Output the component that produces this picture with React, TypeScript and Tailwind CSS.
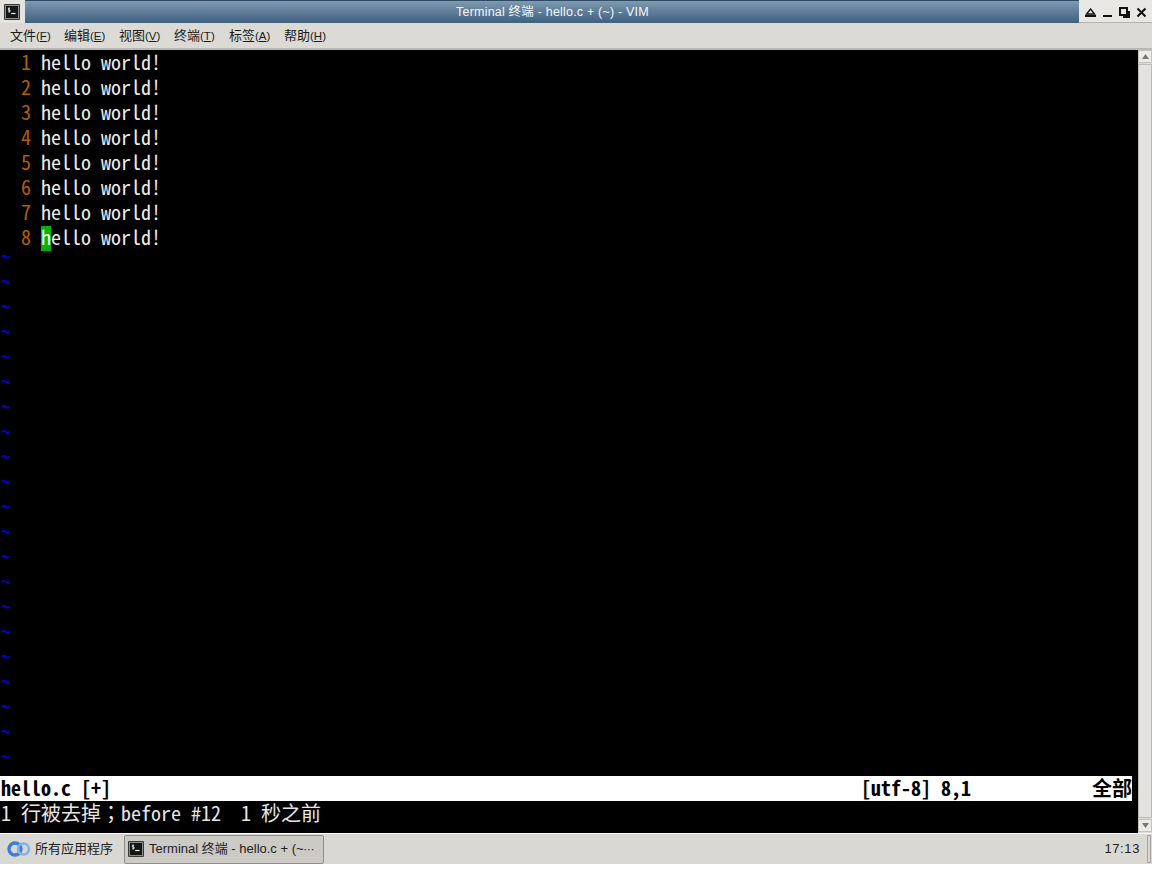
import React from "react";

const mono = "font-['Noto_Sans_Mono_CJK_SC','DejaVu_Sans_Mono',monospace]";
const sans = "font-['Liberation_Sans','Noto_Sans_CJK_SC',sans-serif]";

function TermIcon({ size }: { size: number }) {
  return (
    <svg width={size} height={size} viewBox="0 0 16 16" className="shrink-0">
      <rect x="0" y="0" width="16" height="16" rx="1" fill="#3a3c3c" />
      <rect x="1" y="1" width="14" height="14" fill="#8a8c8a" />
      <rect x="2" y="2" width="12" height="12" fill="#151717" />
      <path d="M6 4.2H4.4V6H6V7.8H4.2M5.1 3.6V8.4" stroke="#f2f2f2" strokeWidth="0.8" fill="none" />
      <path d="M7.2 9.5H11.5" stroke="#f2f2f2" strokeWidth="1.2" />
    </svg>
  );
}

function MenuItem({ label, k }: { label: string; k: string }) {
  return (
    <span className="w-[55px] first:w-[54px] whitespace-nowrap text-[13px]">
      {label}
      <span className="text-[11.5px]">
        (<span className="underline">{k}</span>)
      </span>
    </span>
  );
}

export default function App() {
  const lines = [1, 2, 3, 4, 5, 6, 7, 8];
  const tildes = Array.from({ length: 21 });
  return (
    <div className={`w-[1152px] h-[896px] bg-white flex flex-col overflow-hidden ${sans}`}>
      {/* Title bar */}
      <div className="h-[23px] flex bg-[#dcdad5] shrink-0">
        <div className="w-[25px] pl-[4px] pt-[4px] bg-[#e4e3df]">
          <TermIcon size={16} />
        </div>
        <div className="flex-1 flex items-center justify-center border-t border-[#2f4a63] bg-gradient-to-b from-[#7f9ab1] to-[#3f6080] text-[#f4f6f8] text-[12.5px] tracking-[0.2px] pl-[1px]">
          Terminal 终端 - hello.c + (~) - VIM
        </div>
        <div className="w-[73px] border-b border-[#b5b3ae] bg-[#e8e7e3]">
          <svg width="73" height="22" viewBox="0 0 73 22">
            <path d="M11.5 9L15.5 14H7.5Z" fill="none" stroke="#111" strokeWidth="1.4" />
            <rect x="6" y="15" width="11" height="2" fill="#111" />
            <rect x="24" y="15" width="9" height="2" fill="#111" />
            <rect x="41" y="8" width="7" height="7" fill="none" stroke="#111" strokeWidth="2" />
            <path d="M50 11V17H44" fill="none" stroke="#111" strokeWidth="2" />
            <path d="M58.5 8.5L66.5 16.5M66.5 8.5L58.5 16.5" stroke="#111" strokeWidth="2" />
          </svg>
        </div>
      </div>
      {/* Menu bar */}
      <div className="h-[27px] shrink-0 flex items-center pl-[10px] pt-[1px] bg-[#dcdad5] border-b-2 border-[#b9b7b2] text-[#1a1a1a]">
        <MenuItem label="文件" k="F" />
        <MenuItem label="编辑" k="E" />
        <MenuItem label="视图" k="V" />
        <MenuItem label="终端" k="T" />
        <MenuItem label="标签" k="A" />
        <MenuItem label="帮助" k="H" />
      </div>
      {/* Terminal */}
      <div className="h-[783px] shrink-0 flex bg-black">
        <div className={`flex-1 pt-[1px] text-[20px] ${mono} whitespace-pre`}>
          {lines.map((n) => (
            <div key={n} className="h-[25px] pl-[1px] flex text-[#ececec] leading-[21px]">
              <span className="w-[40px] text-right pr-[10px] text-[#b35c00]">{n}</span>
              {n === 8 ? (
                <>
                  <span className="w-[10px] h-[25px] bg-[#00b300] text-white">h</span>
                  <span>ello world!</span>
                </>
              ) : (
                <span>hello world!</span>
              )}
            </div>
          ))}
          {tildes.map((_, i) => (
            <div key={i} className="h-[25px] pl-[1px] text-[#0000e0] leading-[9px]">~</div>
          ))}
          <div className="h-[25px] w-[1132px] pl-[1px] bg-white text-black font-bold flex leading-[23px]">
            <span className="w-[860px]">hello.c [+]</span>
            <span className="w-[230px]">[utf-8] 8,1</span>
            <span className="flex-1 text-right">全部</span>
          </div>
          <div className="h-[25px] pl-[1px] text-[#e6e6e6] leading-[23px]">
            1 行被去掉<span className="font-['Noto_Sans_Mono_CJK_TC',monospace]">；</span>before #12  1 秒之前
          </div>
        </div>
        {/* Scrollbar */}
        <div className="w-[14px] shrink-0 bg-[#dcdad5] flex flex-col items-stretch pb-[1px]">
          <div className="h-[13px] flex items-center justify-center bg-[#eceae6] border border-[#c4c2bd]">
            <svg width="7" height="5" viewBox="0 0 7 5"><path d="M3.5 0L7 5H0Z" fill="#777" /></svg>
          </div>
          <div className="flex-1 my-[1px] bg-[#e4e2de] border border-[#bdbbb6]" />
          <div className="h-[13px] flex items-center justify-center bg-[#eceae6] border border-[#c4c2bd]">
            <svg width="7" height="5" viewBox="0 0 7 5"><path d="M3.5 5L7 0H0Z" fill="#777" /></svg>
          </div>
        </div>
      </div>
      {/* Taskbar */}
      <div className="h-[31px] shrink-0 flex items-center bg-[#d9d8d2] border-t border-white text-[13px] text-[#222]">
        <div className="flex items-center w-[124px] pl-[7px] gap-[4px]">
          <svg width="24" height="16" viewBox="0 0 24 16" className="shrink-0">
            <circle cx="8" cy="8" r="6" fill="none" stroke="#3b7de0" strokeWidth="3.4" />
            <circle cx="16.5" cy="8" r="5.5" fill="none" stroke="#7fb2f0" strokeWidth="2.6" />
          </svg>
          <span className="whitespace-nowrap">所有应用程序</span>
        </div>
        <div className="w-[200px] h-[29px] flex items-center gap-[5px] pl-[3px] bg-[#cbcac4] border border-[#8f8e89] rounded-[2px]">
          <TermIcon size={16} />
          <span className="whitespace-nowrap">
            Terminal 终端 - hello.c + (~<span className="font-['DejaVu_Sans',sans-serif] text-[11px]">⋯</span>
          </span>
        </div>
        <div className="flex-1 flex justify-end items-center">
          <span className="mr-[7px] tracking-[0.6px]">17:13</span>
          <div className="w-[4px] h-[28px] mr-[1px] border border-[#a6a5a0]" />
        </div>
      </div>
    </div>
  );
}
